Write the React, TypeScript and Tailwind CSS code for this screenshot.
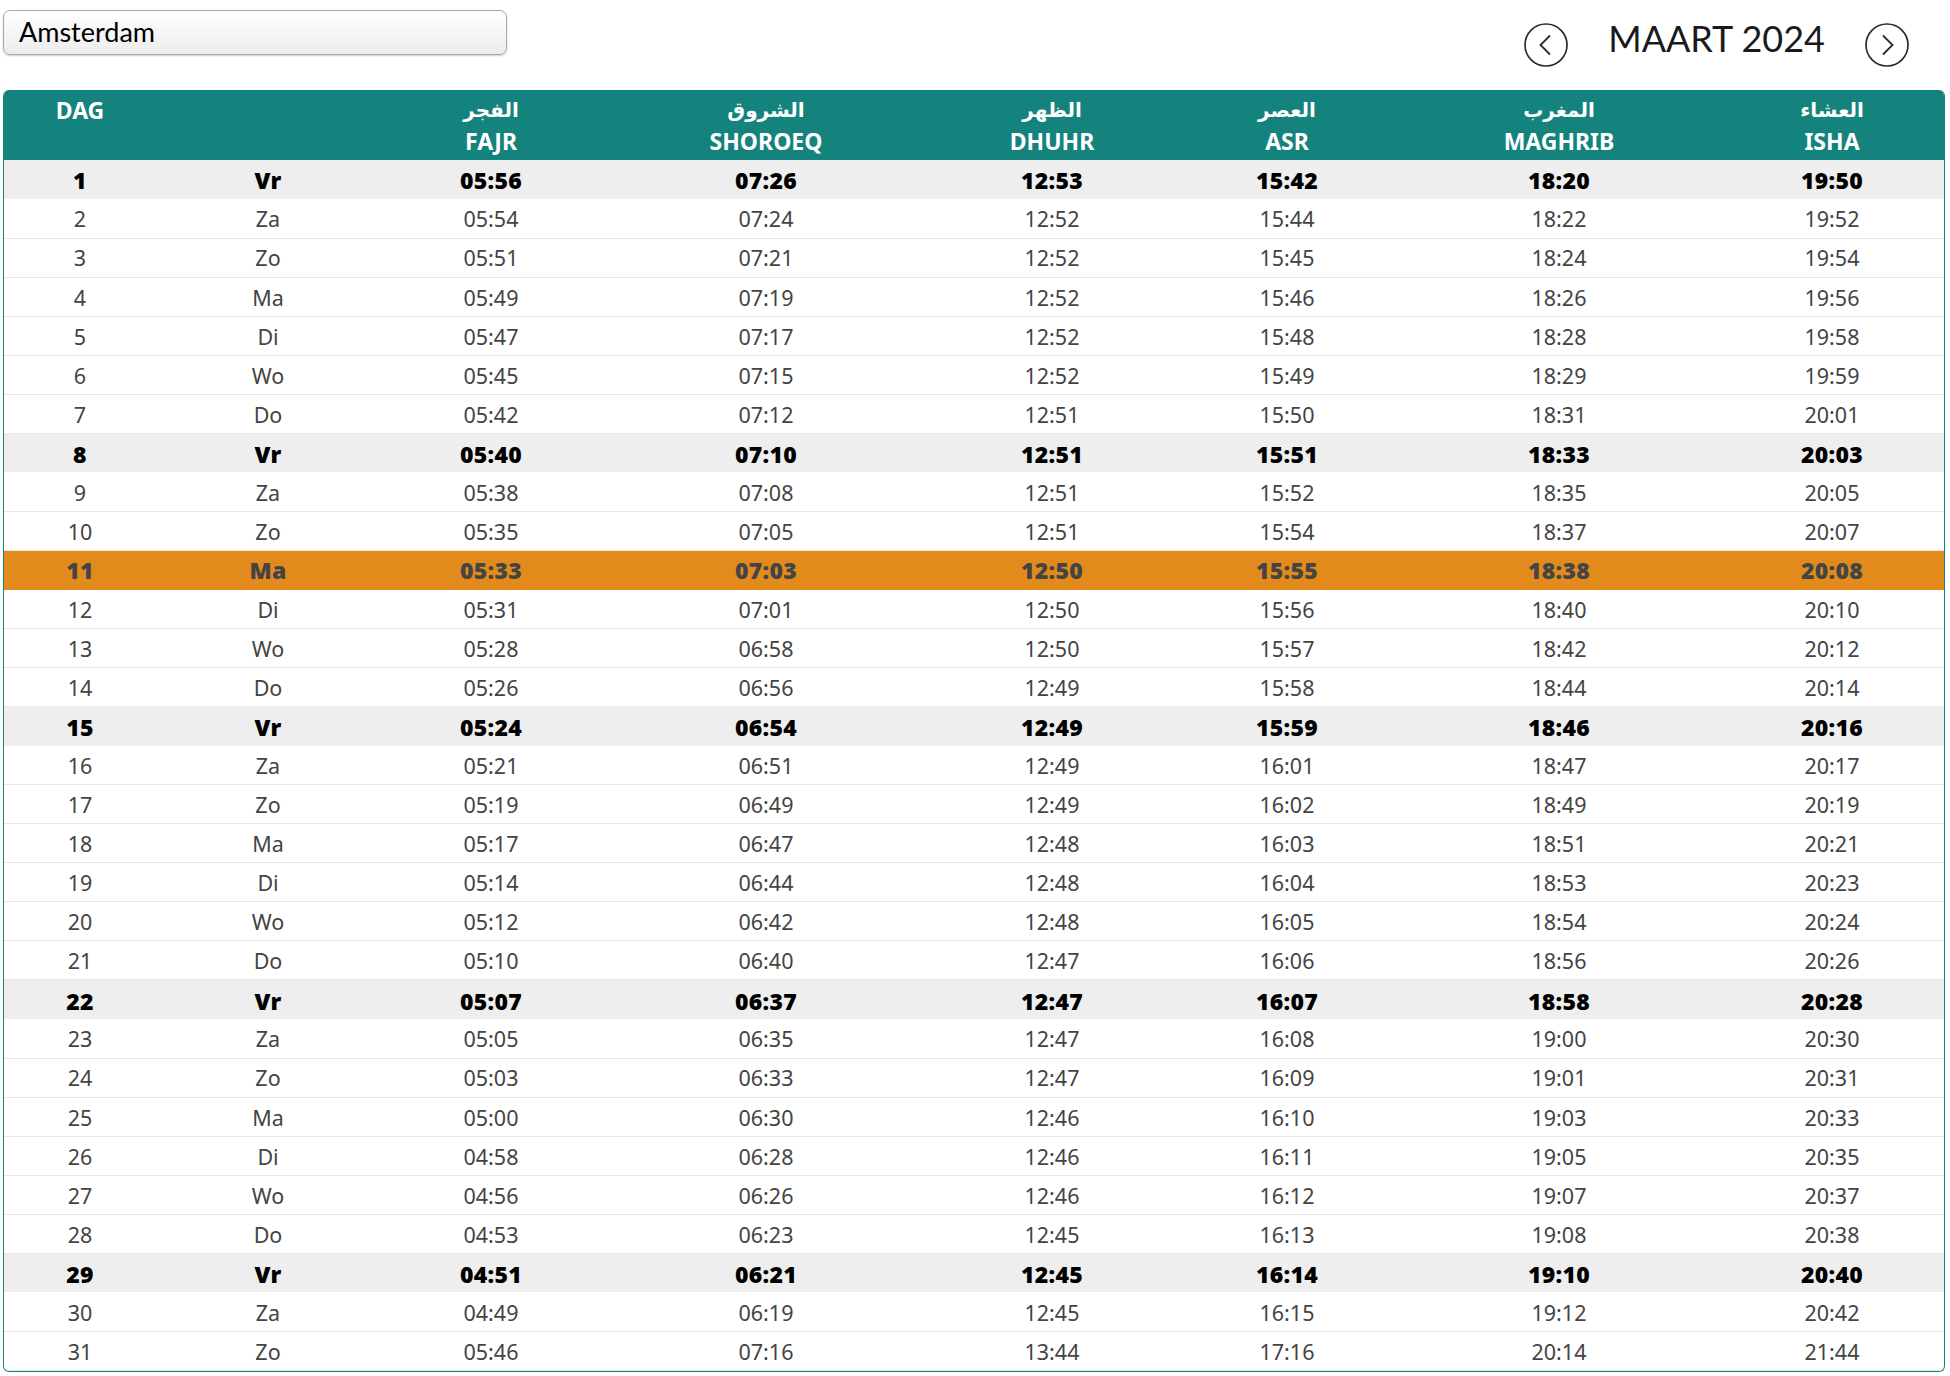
const rows = `05:56 07:26 12:53 15:42 18:20 19:50
05:54 07:24 12:52 15:44 18:22 19:52
05:51 07:21 12:52 15:45 18:24 19:54
05:49 07:19 12:52 15:46 18:26 19:56
05:47 07:17 12:52 15:48 18:28 19:58
05:45 07:15 12:52 15:49 18:29 19:59
05:42 07:12 12:51 15:50 18:31 20:01
05:40 07:10 12:51 15:51 18:33 20:03
05:38 07:08 12:51 15:52 18:35 20:05
05:35 07:05 12:51 15:54 18:37 20:07
05:33 07:03 12:50 15:55 18:38 20:08
05:31 07:01 12:50 15:56 18:40 20:10
05:28 06:58 12:50 15:57 18:42 20:12
05:26 06:56 12:49 15:58 18:44 20:14
05:24 06:54 12:49 15:59 18:46 20:16
05:21 06:51 12:49 16:01 18:47 20:17
05:19 06:49 12:49 16:02 18:49 20:19
05:17 06:47 12:48 16:03 18:51 20:21
05:14 06:44 12:48 16:04 18:53 20:23
05:12 06:42 12:48 16:05 18:54 20:24
05:10 06:40 12:47 16:06 18:56 20:26
05:07 06:37 12:47 16:07 18:58 20:28
05:05 06:35 12:47 16:08 19:00 20:30
05:03 06:33 12:47 16:09 19:01 20:31
05:00 06:30 12:46 16:10 19:03 20:33
04:58 06:28 12:46 16:11 19:05 20:35
04:56 06:26 12:46 16:12 19:07 20:37
04:53 06:23 12:45 16:13 19:08 20:38
04:51 06:21 12:45 16:14 19:10 20:40
04:49 06:19 12:45 16:15 19:12 20:42
05:46 07:16 13:44 17:16 20:14 21:44`
  .split('\n')
  .map((r) => r.split(' '));

const days = ['Vr', 'Za', 'Zo', 'Ma', 'Di', 'Wo', 'Do'];

const prayers = [
  { ar: 'الفجر', nl: 'FAJR' },
  { ar: 'الشروق', nl: 'SHOROEQ' },
  { ar: 'الظهر', nl: 'DHUHR' },
  { ar: 'العصر', nl: 'ASR' },
  { ar: 'المغرب', nl: 'MAGHRIB' },
  { ar: 'العشاء', nl: 'ISHA' },
];

function NavArrow({ dir }: { dir: 'left' | 'right' }) {
  return (
    <svg width="44" height="44" viewBox="0 0 44 44" fill="none" stroke="#2b2b2b" className="mt-[13px]">
      <circle cx="22" cy="22" r="21" strokeWidth="1.7" />
      <path d={dir === 'left' ? 'M26 12.5L16.5 22l9.5 9.5' : 'M18 12.5l9.5 9.5-9.5 9.5'} strokeWidth="1.8" />
    </svg>
  );
}

function getRowStyle(day: number) {
  if (day === 11) return 'bg-[#e28b1c] font-black text-[#444] [&>td]:pt-[1px]';
  if (day % 7 === 1) return 'bg-[#eeeeee] font-black text-black [&>td]:pt-[2px]';
  return 'border-b border-[#e8e8e8] text-[#444] [&>td]:pt-[2px]';
}

export default function App() {
  return (
    <div className="h-[1376px] w-[1950px] overflow-hidden bg-white font-['Noto_Sans',sans-serif]">
      <div className="flex items-start justify-between pl-[3px] pr-[41px] pt-[10px]">
        <div className="h-[45px] w-[504px] rounded-[7px] border border-[#aaaaaa] bg-gradient-to-b from-white to-[#ececec] pl-[15px] font-['Lato',sans-serif] text-[27px] leading-[41px] text-black shadow-[0_1px_2px_rgba(0,0,0,0.2)]">
          Amsterdam
        </div>
        <div className="flex items-start">
          <NavArrow dir="left" />
          <div className="mx-[40px] mt-[6px] font-['Lato',sans-serif] text-[36px] leading-[44px] text-[#1a1a1a]">MAART 2024</div>
          <NavArrow dir="right" />
        </div>
      </div>

      <div className="ml-[3px] mt-[23px] h-[1282px] w-[1942px] overflow-hidden rounded-[6px] border-x border-b border-[#15837d]">
        <table className="w-full table-fixed border-collapse text-center">
          <colgroup>
            <col className="w-[152px]" />
            <col className="w-[222px]" />
            <col className="w-[226px]" />
            <col className="w-[324px]" />
            <col className="w-[248px]" />
            <col className="w-[222px]" />
            <col className="w-[322px]" />
            <col className="w-[224px]" />
          </colgroup>
          <thead>
            <tr className="h-[70px] bg-[#15837d] align-top text-[23px] font-black leading-[31px] text-white">
              <th className="pt-[5px]">DAG</th>
              <th />
              {prayers.map((p) => (
                <th key={p.nl} className="pt-[5px]">
                  <div className="font-['DejaVu_Sans',sans-serif] text-[20px] font-bold">{p.ar}</div>
                  <div>{p.nl}</div>
                </th>
              ))}
            </tr>
          </thead>
          <tbody>
            {rows.map((times, i) => {
              const day = i + 1;
              const bold = day === 11 || day % 7 === 1;
              return (
                <tr
                  key={day}
                  className={`h-[39.06px] ${getRowStyle(day)} ${bold ? 'text-[23px] tracking-[0.3px]' : 'text-[21.5px]'}`}
                >
                  <td>{day}</td>
                  <td className="pl-[2px]">{days[i % 7]}</td>
                  {times.map((t, j) => (
                    <td key={j}>{t}</td>
                  ))}
                </tr>
              );
            })}
          </tbody>
        </table>
      </div>
    </div>
  );
}
